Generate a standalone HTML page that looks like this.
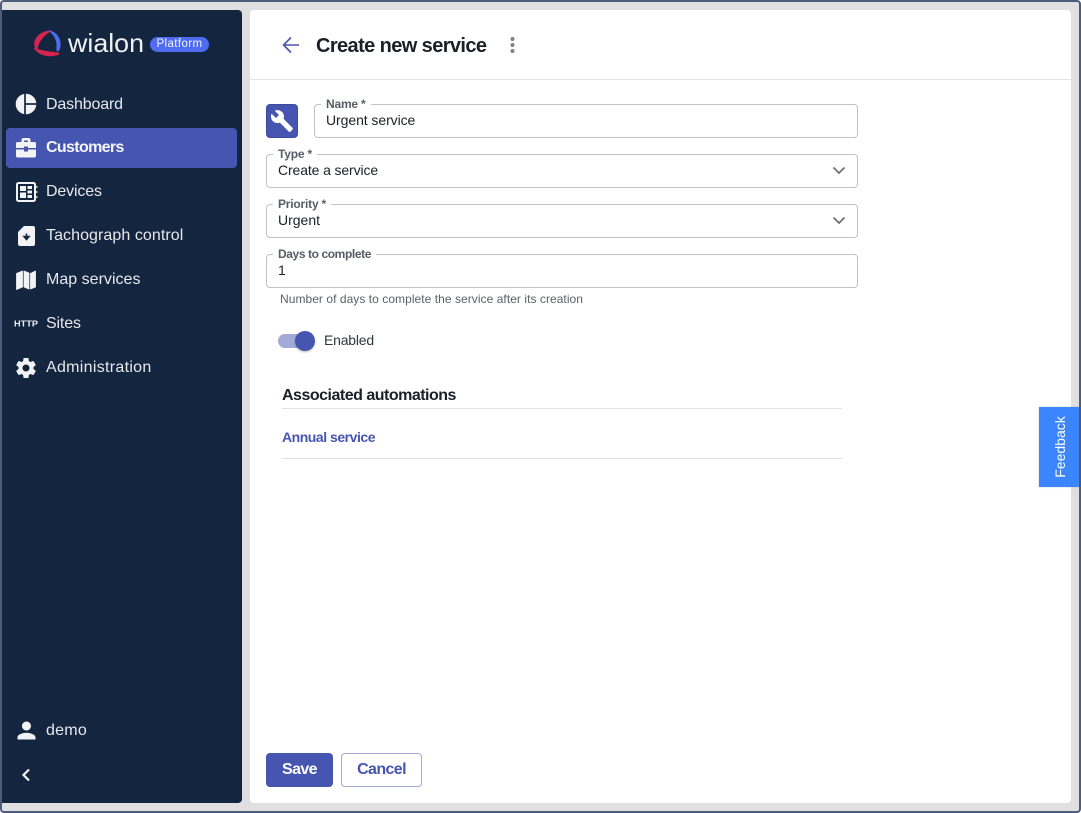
<!DOCTYPE html>
<html><head><meta charset="utf-8"><style>
*{box-sizing:border-box}
html,body{margin:0;padding:0}
body{width:1081px;height:813px;overflow:hidden;background:#fff;font-family:"Liberation Sans",sans-serif;position:relative}
#frame{position:absolute;left:0;top:0;width:1081px;height:813px;background:#e0e0e0;border:2px solid #4c5c7c;border-radius:4px}
.abs{position:absolute}
#side{position:absolute;left:2px;top:10px;width:240px;height:793px;background:#14253f;border-radius:0 4px 4px 0}
#main{position:absolute;left:250px;top:10px;width:821px;height:793px;background:#fff;border-radius:4px}
.nav{position:absolute;left:46px;font-size:16px;line-height:20px;color:#e6e8ec;white-space:nowrap;letter-spacing:-.15px}
.ic{position:absolute}
.fld{position:absolute;border:1px solid #c2c2c2;border-radius:4px;height:34px;width:592px;background:#fff}
.lab{position:absolute;top:97px;font-size:12px;line-height:14px;font-weight:700;color:#585c66;background:#fff;padding:0 5px;white-space:nowrap;letter-spacing:-.2px}
.val{position:absolute;font-size:14px;line-height:18px;color:#1b1f27;white-space:nowrap}
</style></head><body>
<div id="frame"></div>
<div id="side"></div>
<div class="abs" style="left:6px;top:128px;width:231px;height:40px;background:#4655b0;border-radius:4px"></div>

<svg class="abs" style="left:32px;top:28px" width="34" height="30" viewBox="0 0 34 30">
<path d="M20 2.500C11 2 3 8 2.200 15C2 18.500 3.500 21 5.500 23C5.500 16 10 8.500 20 2.500Z" fill="#d6234f"/>
<path d="M4 21.500C9 27.500 19 28.800 27 25.500C21 25 12 24 4 21.500Z" fill="#d6234f" stroke="#d6234f" stroke-width="1.800"/>
<path d="M16 2.200C24 3 29.500 10 28.500 18C28.300 21 27 23.500 25.500 23.500C24 23 24.500 20 24.500 17C24.500 11 21 6 16 2.200Z" fill="#4f6cf0"/>
</svg>
<svg class="abs" style="left:66px;top:26px" width="82" height="30" viewBox="0 0 82 30">
<text x="2" y="26" font-family="'Liberation Sans',sans-serif" font-size="26" fill="#f0f1f3" textLength="76" lengthAdjust="spacingAndGlyphs">wialon</text>
</svg>
<div class="abs" style="left:150px;top:37px;width:59px;height:15px;border-radius:8px;background:#4f6cf0;color:#f2f4fe;font-size:11.500px;line-height:15px;text-align:center;letter-spacing:.4px">Platform</div>

<svg class="ic" style="left:15px;top:93px" width="22" height="22" viewBox="0 0 22 22">
<circle cx="11" cy="11" r="10.300" fill="#f2f3f5"/><path d="M10 0V22" stroke="#14253f" stroke-width="1.700"/><path d="M10 11H22" stroke="#14253f" stroke-width="1.700"/>
</svg>
<div class="nav" style="top:95px">Dashboard</div>

<svg class="ic" style="left:15px;top:137px" width="22" height="22" viewBox="0 0 22 22">
<path d="M6.500 5V3C6.500 1.800 7.500 1 8.500 1H13.500C14.500 1 15.500 1.800 15.500 3V5H19.500C20.500 5 21 5.800 21 6.500V11H13V9.500H9V11H1V6.500C1 5.800 1.500 5 2.500 5ZM9 5H13V3.500H9Z" fill="#f2f3f5" fill-rule="evenodd"/>
<path d="M1 12.500H9V14.500H13V12.500H21V19C21 20 20.300 20.500 19.500 20.500H2.500C1.700 20.500 1 20 1 19Z" fill="#f2f3f5"/>
</svg>
<div class="nav" style="top:138px;font-weight:700;color:#f4f5fb;letter-spacing:-.65px">Customers</div>

<svg class="ic" style="left:15px;top:181px" width="23" height="22" viewBox="0 0 23 22">
<rect x="2" y="2" width="18" height="18" rx="1.500" fill="none" stroke="#f2f3f5" stroke-width="2"/>
<path d="M5 5H11V10H5ZM5 11.500H11V17H5ZM12.500 5H17V8H12.500ZM12.500 9.500H17V12.500H12.500ZM12.500 14H17V17H12.500Z" fill="#f2f3f5"/>
<path d="M20 6H22.500M20 11H22.500M20 16H22.500" stroke="#f2f3f5" stroke-width="1.500"/>
</svg>
<div class="nav" style="top:182px">Devices</div>

<svg class="ic" style="left:17px;top:225px" width="19" height="22" viewBox="0 0 19 22">
<path d="M7 1H16C17 1 18 1.800 18 3V19C18 20.200 17 21 16 21H3C2 21 1 20.200 1 19V7Z" fill="#f2f3f5"/>
<path d="M9.500 8.500V13.500M7 11.500L9.500 14.500L12 11.500Z" stroke="#14253f" stroke-width="1.600" fill="#14253f"/>
</svg>
<div class="nav" style="top:226px;letter-spacing:.07px">Tachograph control</div>

<svg class="ic" style="left:15px;top:269px" width="22" height="22" viewBox="0 0 22 22">
<path d="M1.500 4.500L7.500 2V18L1.500 20.500ZM9 2L14 4V20L9 18ZM15.500 4.500L20.500 2V18L15.500 20Z" fill="#f2f3f5" stroke="#f2f3f5" stroke-width=".8" stroke-linejoin="round"/>
</svg>
<div class="nav" style="top:270px;letter-spacing:.02px">Map services</div>

<svg class="ic" style="left:14px;top:318px" width="24" height="10" viewBox="0 0 24 10">
<text x="0" y="8.500" font-family="'Liberation Sans',sans-serif" font-weight="700" font-size="8.500" fill="#f2f3f5" textLength="24" lengthAdjust="spacingAndGlyphs">HTTP</text>
</svg>
<div class="nav" style="top:314px">Sites</div>

<svg class="ic" style="left:14px;top:356px" width="24" height="24" viewBox="0 0 24 24">
<path fill="#f2f3f5" d="M19.430 12.980c.04-.32.070-.64.070-.98s-.03-.66-.07-.98l2.110-1.650c.19-.15.240-.42.120-.64l-2-3.460c-.12-.22-.39-.30-.61-.22l-2.490 1c-.52-.40-1.080-.73-1.690-.98l-.38-2.650C14.460 2.180 14.250 2 14 2h-4c-.25 0-.46.18-.49.420l-.38 2.650c-.61.25-1.170.59-1.690.98l-2.490-1c-.23-.09-.49 0-.61.220l-2 3.460c-.13.220-.07.490.12.640l2.110 1.650c-.04.32-.07.650-.07.980s.03.660.07.980l-2.110 1.650c-.19.150-.24.420-.12.640l2 3.460c.12.220.39.300.61.220l2.490-1c.52.400 1.080.730 1.690.980l.38 2.650c.03.240.24.420.49.420h4c.25 0 .46-.18.49-.42l.38-2.650c.61-.25 1.170-.59 1.690-.98l2.490 1c.23.090.49 0 .61-.22l2-3.460c.12-.22.070-.49-.12-.64l-2.110-1.650zM12 15.500c-1.930 0-3.500-1.570-3.500-3.500s1.570-3.500 3.500-3.500 3.500 1.570 3.500 3.500-1.570 3.500-3.500 3.500z"/>
</svg>
<div class="nav" style="top:358px;letter-spacing:.3px">Administration</div>

<svg class="ic" style="left:12.500px;top:717px" width="27" height="27" viewBox="0 0 24 24">
<path fill="#f2f3f5" d="M12 12c2.210 0 4-1.790 4-4s-1.790-4-4-4-4 1.790-4 4 1.790 4 4 4zm0 2c-2.670 0-8 1.340-8 4v2h16v-2c0-2.660-5.330-4-8-4z"/>
</svg>
<div class="nav" style="top:721px;letter-spacing:.25px">demo</div>
<svg class="ic" style="left:20px;top:768px" width="12" height="14" viewBox="0 0 12 14">
<path d="M9 1.500L3.500 7L9 12.500" fill="none" stroke="#f2f3f5" stroke-width="2.200"/>
</svg>

<div id="main"></div>
<div class="abs" style="left:250px;top:79px;width:821px;height:1px;background:#e4e4e4"></div>
<svg class="abs" style="left:281px;top:35px" width="20" height="20" viewBox="0 0 20 20">
<path d="M18 10H2.500M10 2.500L2.500 10L10 17.500" fill="none" stroke="#4655b0" stroke-width="1.600"/>
</svg>
<div class="abs" style="left:316px;top:34px;font-size:20px;line-height:24px;font-weight:700;color:#1b1f27;white-space:nowrap;letter-spacing:-.6px">Create new service</div>
<svg class="abs" style="left:508px;top:36px" width="10" height="18" viewBox="0 0 10 18">
<circle cx="4.500" cy="3" r="2" fill="#7d7f85"/><circle cx="4.500" cy="9" r="2" fill="#7d7f85"/><circle cx="4.500" cy="15" r="2" fill="#7d7f85"/>
</svg>

<div class="abs" style="left:266px;top:104px;width:32px;height:34px;background:#4655b0;border:1px solid #3c4a9c;border-radius:4px"></div>
<svg class="abs" style="left:270px;top:109px" width="24" height="24" viewBox="0 0 24 24">
<path fill="#fff" d="M22.700 19l-9.100-9.100c.9-2.300.4-5-1.500-6.900-2-2-5-2.400-7.400-1.300L9 6 6 9 1.600 4.700C.4 7.100.9 10.100 2.900 12.100c1.900 1.900 4.600 2.400 6.900 1.500l9.100 9.100c.4.400 1 .4 1.400 0l2.300-2.300c.5-.4.500-1.100.1-1.400z"/>
</svg>

<div class="fld" style="left:314px;top:104px;width:544px"></div>
<div class="lab" style="left:321px">Name *</div>
<div class="val" style="left:326px;top:111px;letter-spacing:-.07px">Urgent service</div>

<div class="fld" style="left:266px;top:154px"></div>
<div class="lab" style="left:273px;top:147px">Type *</div>
<div class="val" style="left:278px;top:161px;letter-spacing:-.12px">Create a service</div>
<svg class="abs" style="left:832px;top:166px" width="14" height="10" viewBox="0 0 14 10"><path d="M1.500 1.500L7 7L12.500 1.500" fill="none" stroke="#6f6e70" stroke-width="1.700"/></svg>

<div class="fld" style="left:266px;top:204px"></div>
<div class="lab" style="left:273px;top:197px">Priority *</div>
<div class="val" style="left:278px;top:211px">Urgent</div>
<svg class="abs" style="left:832px;top:216px" width="14" height="10" viewBox="0 0 14 10"><path d="M1.500 1.500L7 7L12.500 1.500" fill="none" stroke="#6f6e70" stroke-width="1.700"/></svg>

<div class="fld" style="left:266px;top:254px"></div>
<div class="lab" style="left:273px;top:247px;letter-spacing:-.4px">Days to complete</div>
<div class="val" style="left:278px;top:261px">1</div>
<div class="abs" style="left:280px;top:292px;font-size:12px;line-height:15px;color:#5d6068;white-space:nowrap;letter-spacing:.05px">Number of days to complete the service after its creation</div>

<div class="abs" style="left:278px;top:334px;width:34px;height:14px;background:#a3a9d8;border-radius:7px"></div>
<div class="abs" style="left:295px;top:331px;width:20px;height:20px;background:#4655b0;border-radius:50%;box-shadow:0 1px 2px rgba(0,0,0,.25)"></div>
<div class="val" style="left:324px;top:331px;color:#33363d;letter-spacing:-.2px">Enabled</div>

<div class="abs" style="left:282px;top:386px;font-size:16px;line-height:19px;font-weight:700;color:#1b1f27;white-space:nowrap;letter-spacing:-.5px">Associated automations</div>
<div class="abs" style="left:282px;top:408px;width:560px;height:1px;background:#e2e2e2"></div>
<div class="abs" style="left:282px;top:429px;font-size:14px;line-height:17px;font-weight:700;color:#4655b0;white-space:nowrap;letter-spacing:-.47px">Annual service</div>
<div class="abs" style="left:282px;top:458px;width:560px;height:1px;background:#e2e2e2"></div>

<div class="abs" style="left:266px;top:753px;width:67px;height:34px;background:#4655b0;border-radius:4px;color:#fff;font-size:16px;font-weight:700;line-height:34px;text-align:center;letter-spacing:-.6px">Save</div>
<div class="abs" style="left:341px;top:753px;width:81px;height:34px;background:#fff;border:1px solid #a3a9d8;border-radius:4px;color:#4655b0;font-size:16px;font-weight:700;line-height:32px;text-align:center;letter-spacing:-.6px">Cancel</div>

<div class="abs" style="left:1039px;top:407px;width:40px;height:80px;background:#3b86ff;box-shadow:0 0 2px rgba(0,0,0,.2)"></div>
<div class="abs" style="left:1020px;top:437px;width:80px;height:20px;transform:rotate(-90deg);color:#fff;font-size:14px;line-height:20px;text-align:center">Feedback</div>
</body></html>
